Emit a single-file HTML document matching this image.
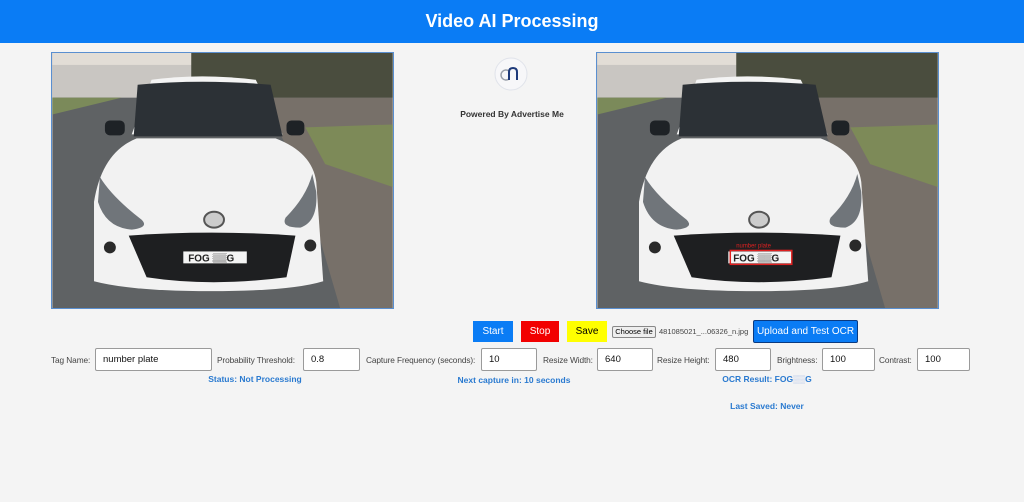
<!DOCTYPE html>
<html><head><meta charset="utf-8"><style>
*{box-sizing:border-box;margin:0;padding:0}
body{width:1024px;height:502px;background:#f4f4f4;font-family:"Liberation Sans",Arial,sans-serif;position:relative;overflow:hidden}
.hdr{position:absolute;left:0;top:0;width:1024px;height:43px;background:#0a7cf5;color:#fff;font-weight:bold;font-size:18px;text-align:center;line-height:43px}
.img{position:absolute;top:52px;width:343px;height:257px;border:1px solid #5a8fd0}
.abs{position:absolute}
.btn{position:absolute;top:321px;height:21px;font-size:10px;line-height:21px;text-align:center}
.lbl{position:absolute;top:355px;font-size:8.3px;color:#444;letter-spacing:-0.1px}
.inp{position:absolute;top:348px;height:23px;background:#fff;border:1px solid #9a9a9a;border-radius:2px;font-size:9.5px;padding-left:7px;line-height:21px;color:#111}
.st{position:absolute;font-size:8.5px;font-weight:bold;color:#2a7ad0;text-align:center}
</style></head><body>
<div class="hdr">Video AI Processing</div>
<svg width="0" height="0" style="position:absolute"><defs>
<g id="car">
<rect width="343" height="257" fill="#5f6264"/>
<rect x="0" y="0" width="150" height="45" fill="#c9c6c2"/>
<rect x="0" y="0" width="150" height="12" fill="#e2ddd6"/>
<rect x="140" y="0" width="203" height="45" fill="#4a4d3e"/>
<polygon points="0,62 70,45 0,45" fill="#7b8a5a"/>
<polygon points="210,45 343,45 343,257 290,257 250,120" fill="#777069"/>
<polygon points="255,75 343,72 343,135 275,112" fill="#7d8a58"/>
<path d="M100,27 Q150,20 205,27 L232,82 L80,82 Z" fill="#f4f4f4"/>
<path d="M86,32 Q150,26 220,32 L232,84 L82,84 Z" fill="#2c3136"/>
<rect x="53" y="68" width="20" height="15" rx="5" fill="#1e2226"/>
<rect x="236" y="68" width="18" height="15" rx="5" fill="#1e2226"/>
<path d="M85,86 L225,86 Q262,100 266,130 L273,230 Q240,240 160,240 Q80,240 42,230 L42,150 Q50,100 85,86 Z" fill="#f2f2f2"/>
<path d="M48,125 Q60,145 90,168 Q98,176 80,178 Q54,176 46,150 Z" fill="#70757a"/>
<path d="M262,122 Q256,145 235,166 Q230,176 250,176 Q268,170 266,140 Z" fill="#70757a"/>
<path d="M77,184 Q160,178 245,184 L236,226 Q160,236 95,226 Z" fill="#1e1f21"/>
<rect x="132" y="200" width="64" height="12" fill="#f4f4f4"/>
<text x="137" y="210" font-size="10" font-family="Liberation Sans" font-weight="bold" fill="#222">FOG ▒▒G</text>
<ellipse cx="163" cy="168" rx="10" ry="8" fill="#ccc" stroke="#555" stroke-width="2"/>
<circle cx="58" cy="196" r="6" fill="#2a2a2a"/><circle cx="260" cy="194" r="6" fill="#2a2a2a"/>
</g></defs></svg>
<div class="img" style="left:51px"><svg width="341" height="255" viewBox="0 0 343 257"><use href="#car"/></svg></div>
<div class="img" style="left:596px"><svg width="341" height="255" viewBox="0 0 343 257"><use href="#car"/><rect x="134" y="199" width="62" height="14" fill="none" stroke="#e02020" stroke-width="1.5"/><text x="140" y="196" font-size="6" fill="#e02020">number plate</text></svg></div>
<svg class="abs" style="left:494px;top:57px" width="34" height="34"><circle cx="17" cy="17" r="16" fill="#f7f7f9" stroke="#e0e3ea"/><path d="M15,22 a5,5 0 1,1 0,-8" fill="none" stroke="#9aa0aa" stroke-width="1.5"/><path d="M15,23 V15 Q15,11 19,11 Q23,11 23,15 V23" fill="none" stroke="#1e3a7a" stroke-width="2"/></svg>
<div class="abs" style="left:452px;top:109px;width:120px;text-align:center;font-size:8.5px;font-weight:bold;color:#333">Powered By Advertise Me</div>
<div class="btn" style="left:473px;width:40px;background:#0a7cf5;color:#fff">Start</div>
<div class="btn" style="left:521px;width:38px;background:#f20000;color:#fff">Stop</div>
<div class="btn" style="left:567px;width:40px;background:#ffff00;color:#000">Save</div>
<div class="abs" style="left:612px;top:326px;width:44px;height:12px;border:1px solid #888;border-radius:2px;background:#eee;font-size:7.5px;line-height:10px;text-align:center">Choose file</div>
<div class="abs" style="left:659px;top:327px;font-size:7.5px;color:#444">481085021_...06326_n.jpg</div>
<div class="btn" style="left:753px;top:320px;height:23px;width:105px;background:#0a7cf5;color:#fff;border:1px solid #0a3a80;border-radius:2px;line-height:21px">Upload and Test OCR</div>
<div class="lbl" style="left:51px">Tag Name:</div>
<div class="inp" style="left:95px;width:117px">number plate</div>
<div class="lbl" style="left:217px">Probability Threshold:</div>
<div class="inp" style="left:303px;width:57px">0.8</div>
<div class="lbl" style="left:366px">Capture Frequency (seconds):</div>
<div class="inp" style="left:481px;width:56px">10</div>
<div class="lbl" style="left:543px">Resize Width:</div>
<div class="inp" style="left:597px;width:56px">640</div>
<div class="lbl" style="left:657px">Resize Height:</div>
<div class="inp" style="left:715px;width:56px">480</div>
<div class="lbl" style="left:777px">Brightness:</div>
<div class="inp" style="left:822px;width:53px">100</div>
<div class="lbl" style="left:879px">Contrast:</div>
<div class="inp" style="left:917px;width:53px">100</div>
<div class="st" style="left:195px;top:374px;width:120px">Status: Not Processing</div>
<div class="st" style="left:444px;top:375px;width:140px">Next capture in: 10 seconds</div>
<div class="st" style="left:707px;top:374px;width:120px">OCR Result: FOG<span style="color:#b8c8e8">▒▒</span>G</div>
<div class="st" style="left:707px;top:401px;width:120px">Last Saved: Never</div>
</body></html>
